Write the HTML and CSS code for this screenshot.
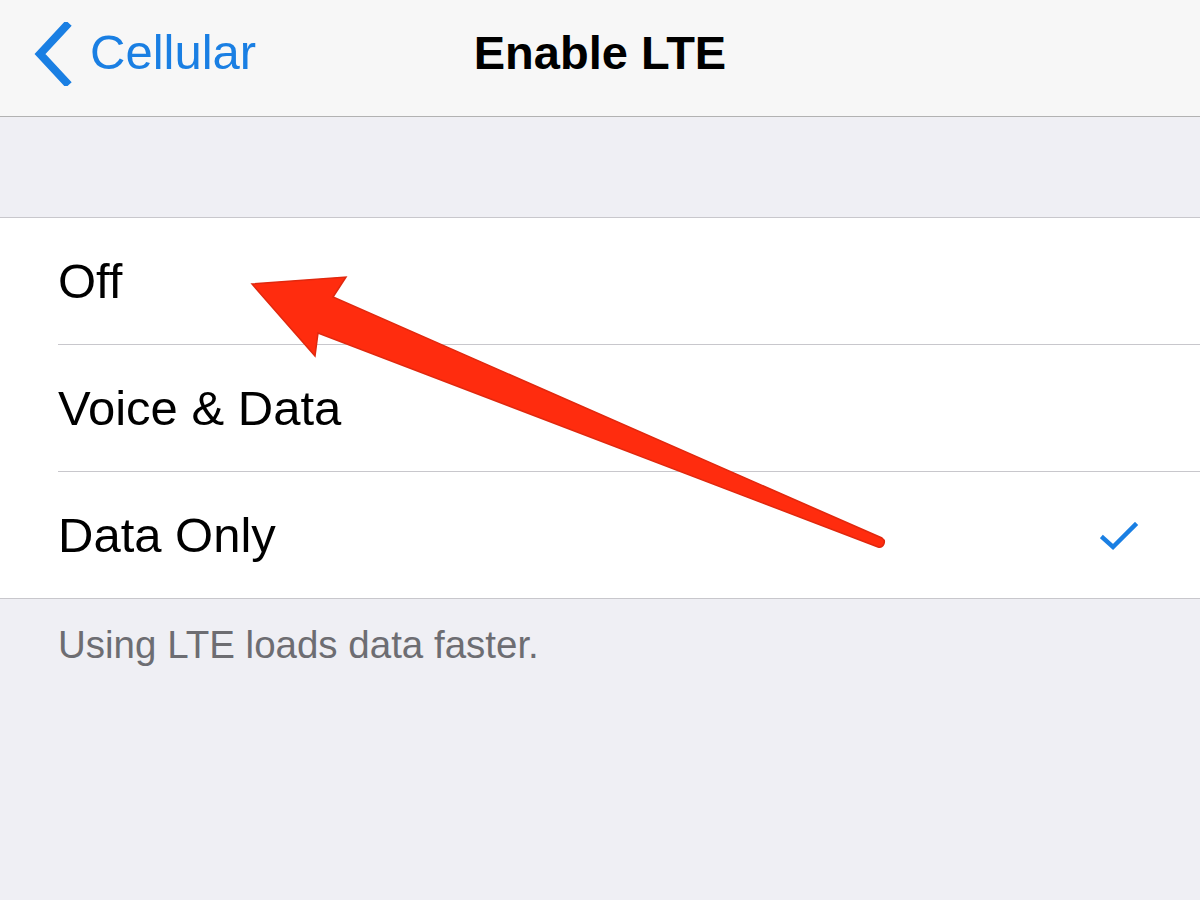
FILE: index.html
```html
<!DOCTYPE html>
<html>
<head>
<meta charset="utf-8">
<link rel="stylesheet" href="styles.css">
</head>
<body>
<div class="page">
  <header class="nav">
    <div class="back">
      <svg class="chev" width="40" height="64" viewBox="0 0 40 64"><polyline points="34,4 8,32 34,60" fill="none" stroke="#1a7fe3" stroke-width="8" stroke-linecap="square"/></svg>
      <span class="back-label">Cellular</span>
    </div>
    <div class="title">Enable LTE</div>
    <div></div>
  </header>
  <div class="spacer"></div>
  <ul class="group">
    <li class="row"><span>Off</span></li>
    <li class="row"><span>Voice &amp; Data</span></li>
    <li class="row"><span>Data Only</span>
      <svg class="check" width="40" height="30" viewBox="0 0 40 30"><polyline points="3,16 13,25 35,3" fill="none" stroke="#1a7fe3" stroke-width="4.5" stroke-linecap="square" stroke-linejoin="miter"/></svg>
    </li>
  </ul>
  <p class="footer">Using LTE loads data faster.</p>
  <svg class="arrow" width="1200" height="900" viewBox="0 0 1200 900">
    <path d="M252 284 L346 277 L333 297 L882 538 A5 5 0 0 1 878 547 L318 333 L315 356 Z" fill="#ff2c0e" stroke="#e0280e" stroke-width="1.5" stroke-linejoin="miter"/>
  </svg>
</div>
</body>
</html>
```
FILE: styles.css
```css
* { box-sizing: border-box; }
html, body { margin: 0; padding: 0; }
body {
  width: 1200px;
  height: 900px;
  background: #efeff4;
  font-family: "Liberation Sans", Arial, Helvetica, sans-serif;
  overflow: hidden;
}
.page { position: relative; width: 1200px; height: 900px; }
.nav {
  height: 117px;
  background: #f7f7f7;
  border-bottom: 1px solid #b2b2b2;
  display: grid;
  grid-template-columns: 1fr auto 1fr;
  align-items: center;
  padding-bottom: 12px;
}
.back {
  display: flex;
  align-items: center;
  padding-left: 32px;
  color: #1a7fe3;
}
.chev { display: block; margin-right: 18px; margin-top: 4px; }
.back-label { font-size: 49px; }
.title {
  font-size: 47px;
  font-weight: bold;
  color: #000;
}
.spacer { height: 100px; }
.group {
  list-style: none;
  margin: 0;
  padding: 0 0 0 58px;
  background: #fff;
  border-top: 1px solid #c8c7cc;
  border-bottom: 1px solid #c8c7cc;
}
.row {
  height: 127px;
  display: flex;
  align-items: center;
  justify-content: space-between;
  padding-right: 60px;
  font-size: 49px;
  color: #000;
  border-bottom: 1px solid #c8c7cc;
}
.row:last-child { border-bottom: none; height: 126px; }
.check { display: block; margin-top: 4px; }
.footer {
  margin: 0;
  padding: 24px 0 0 58px;
  font-size: 38.5px;
  color: #6d6d72;
}
.arrow { position: absolute; left: 0; top: 0; pointer-events: none; }
```
